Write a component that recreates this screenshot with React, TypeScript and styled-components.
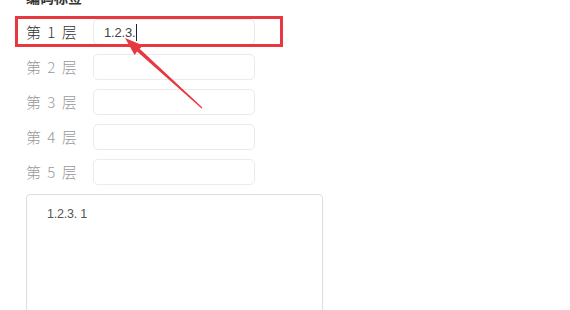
import * as React from 'react'
import styled, { createGlobalStyle } from 'styled-components'

const GlobalStyle = createGlobalStyle`
  html, body {
    margin: 0;
    background: #fff;
    overflow: hidden;
  }
  body {
    font-family: "Noto Sans CJK SC", "Noto Sans", sans-serif;
  }
`

const Page = styled.main`
  position: relative;
  width: 570px;
  height: 310px;
  padding-left: 26px;
  box-sizing: border-box;
  overflow: hidden;
`

const Heading = styled.h3`
  margin: -10px 0 0;
  height: 15px;
  font-size: 14px;
  line-height: 15px;
  font-weight: 700;
  color: #333;
`

const LevelList = styled.div`
  display: flex;
  flex-direction: column;
  gap: 9px;
  margin-top: 14px;
`

const LevelRow = styled.div`
  display: flex;
  align-items: center;
  height: 26px;
`

const LevelLabel = styled.span<{ $active?: boolean }>`
  width: 67px;
  font-size: 15px;
  font-weight: 300;
  line-height: 26px;
  color: ${p => (p.$active ? '#333' : '#9a9a9a')};
  word-spacing: 3px;
`

const Field = styled.div`
  display: flex;
  align-items: center;
  width: 162px;
  height: 26px;
  box-sizing: border-box;
  padding: 0 10px;
  border: 1px solid #ebebeb;
  border-radius: 5px;
  font-family: "Liberation Sans", Arial, sans-serif;
  font-size: 13px;
  color: #444;
  letter-spacing: -0.2px;
`

const Caret = styled.span`
  display: inline-block;
  width: 1px;
  height: 17px;
  margin-left: 1px;
  background: #222;
`

const Output = styled.div`
  margin-top: 9px;
  width: 297px;
  height: 140px;
  box-sizing: border-box;
  padding: 12px 20px;
  border: 1px solid #dedede;
  border-radius: 4px;
  font-family: "Liberation Sans", Arial, sans-serif;
  font-size: 12.5px;
  color: #555;
  letter-spacing: -0.2px;
`

const HighlightBox = styled.div`
  position: absolute;
  left: 15px;
  top: 16px;
  width: 268px;
  height: 31px;
  box-sizing: border-box;
  border: 3px solid #e8383f;
  pointer-events: none;
`

const ArrowLayer = styled.svg`
  position: absolute;
  left: 0;
  top: 0;
  pointer-events: none;
`

const levels = [1, 2, 3, 4, 5]

export default function App() {
  return (
    <>
      <GlobalStyle />
      <Page>
        <Heading>编码标签</Heading>
        <LevelList>
          {levels.map(n => (
            <LevelRow key={n}>
              <LevelLabel $active={n === 1}>第 {n} 层</LevelLabel>
              <Field>
                {n === 1 && (
                  <>
                    1.2.3.
                    <Caret />
                  </>
                )}
              </Field>
            </LevelRow>
          ))}
        </LevelList>
        <Output>1.2.3. 1</Output>
        <HighlightBox />
        <ArrowLayer width="570" height="310" viewBox="0 0 570 310">
          <polygon
            fill="#e8383f"
            points="125,38 143,45.5 139.6,48.8 202.4,107.6 201.6,108.4 137.1,51.4 134.6,55"
          />
        </ArrowLayer>
      </Page>
    </>
  )
}
